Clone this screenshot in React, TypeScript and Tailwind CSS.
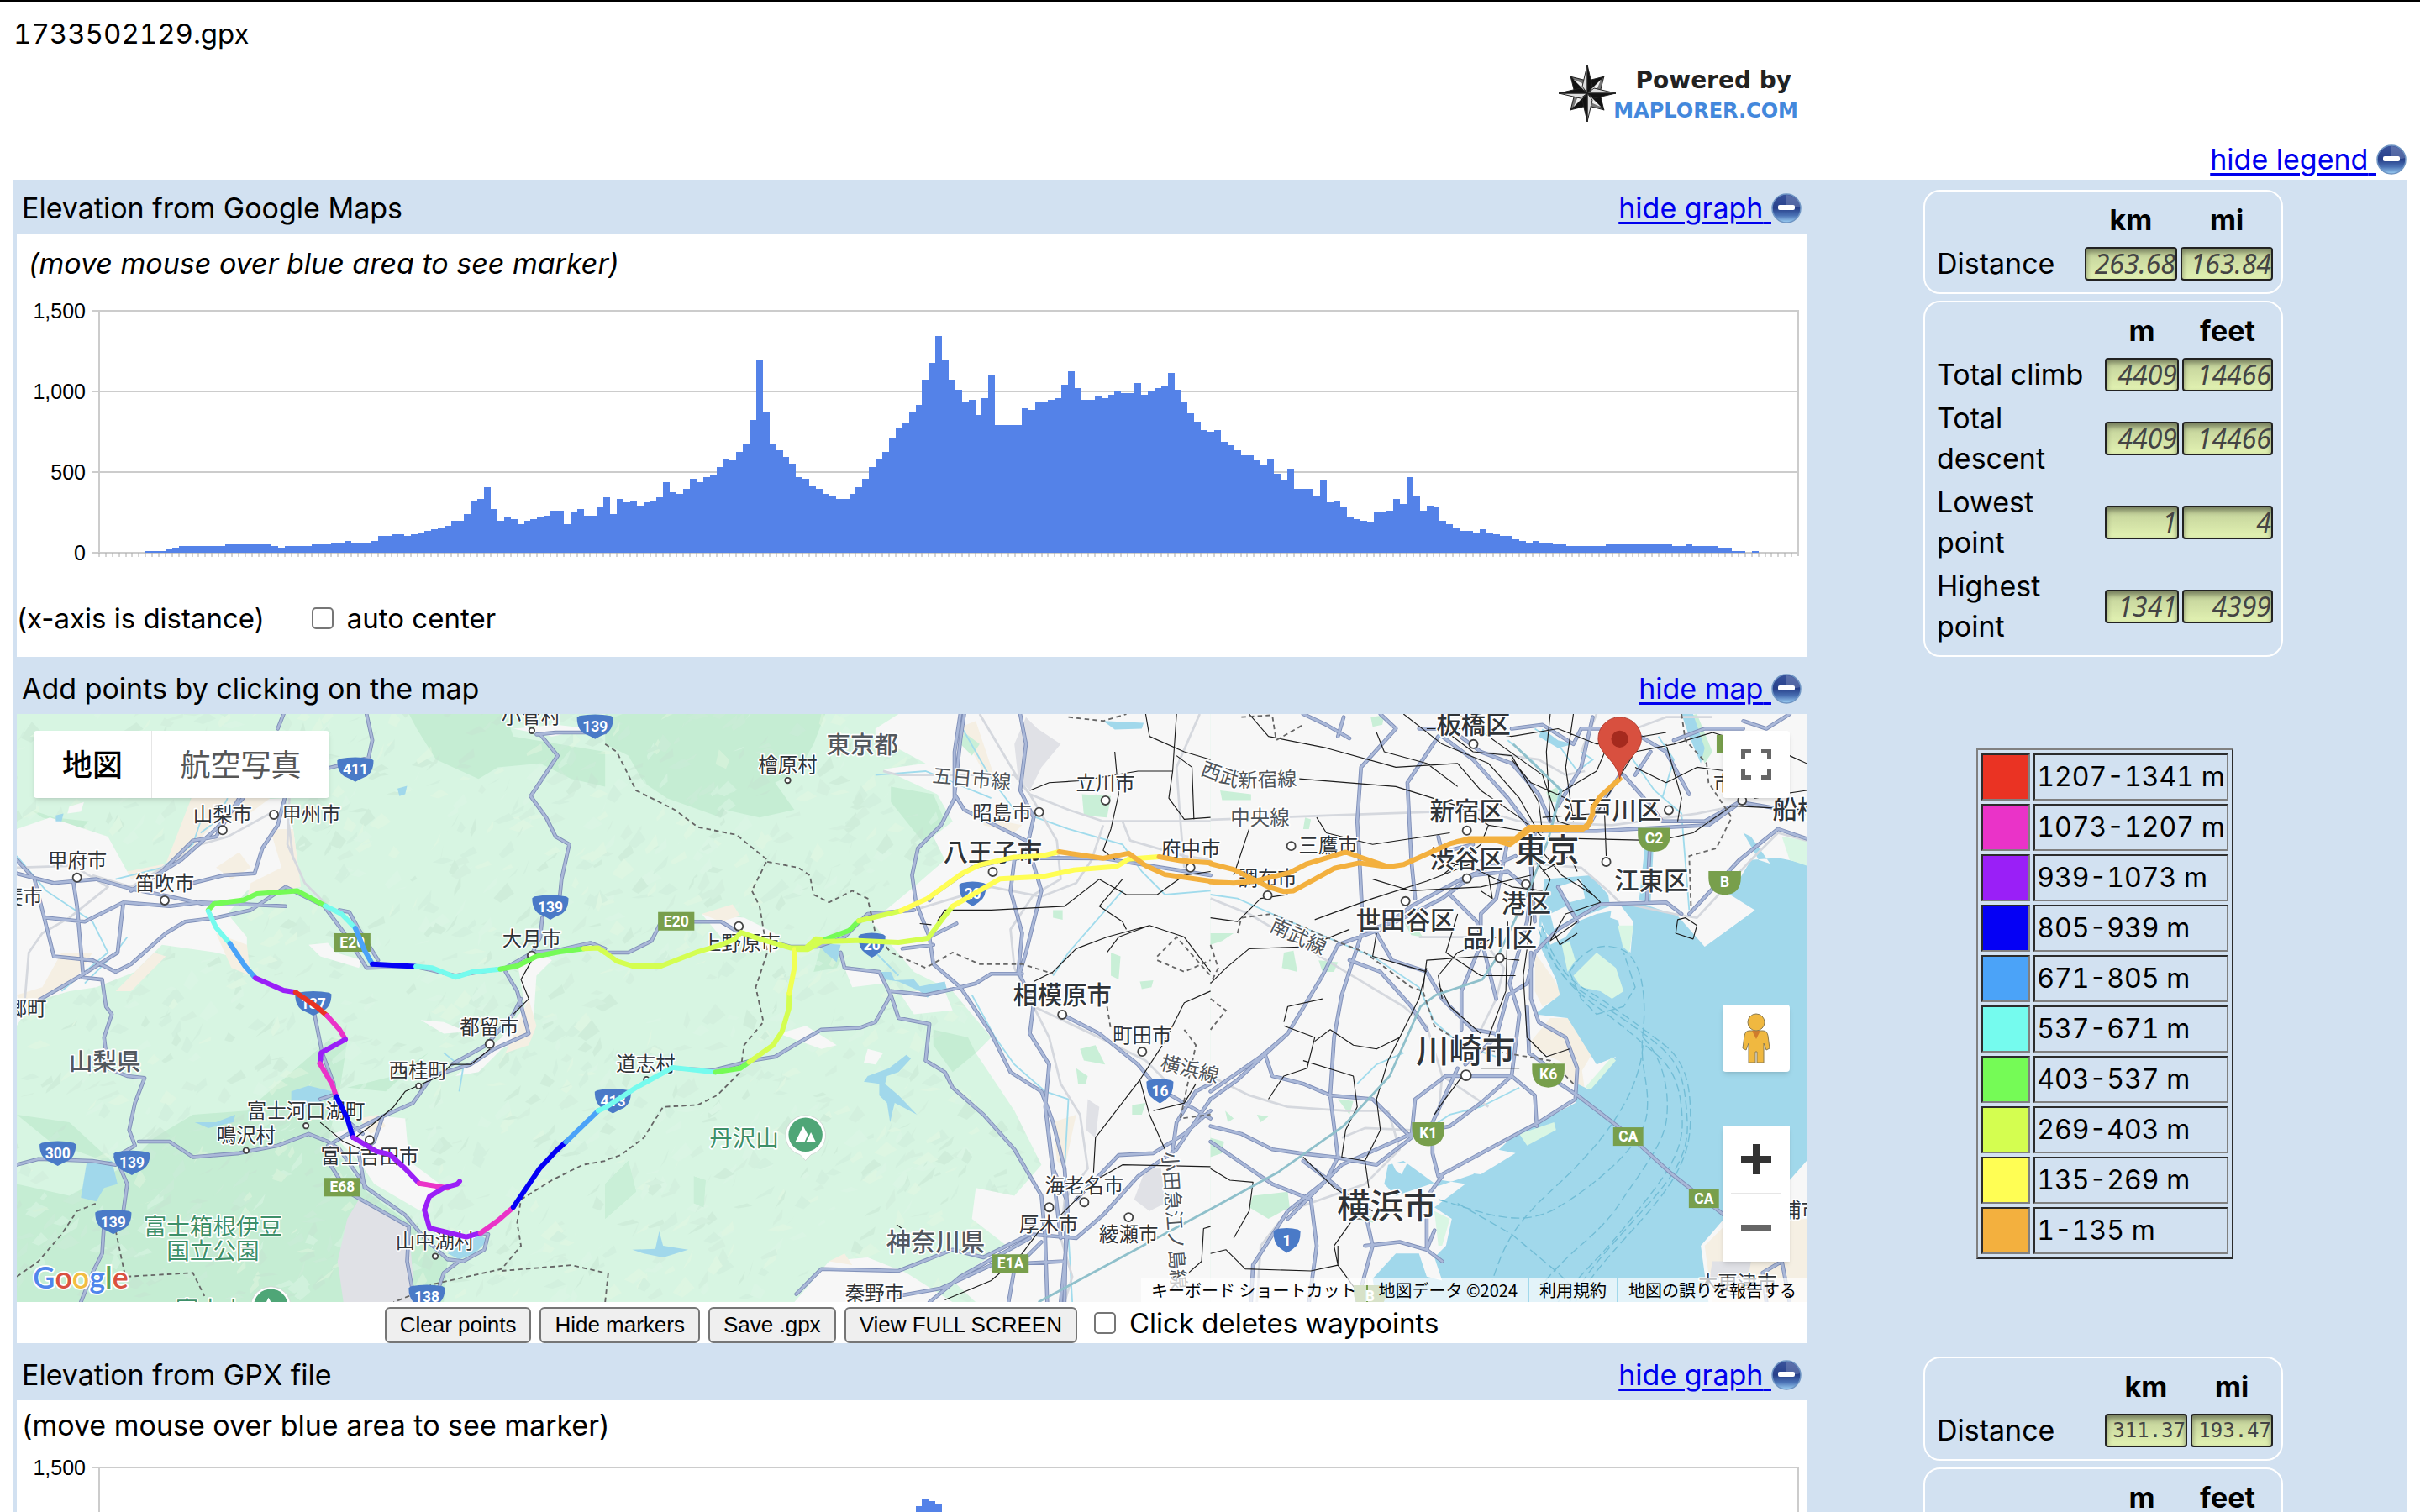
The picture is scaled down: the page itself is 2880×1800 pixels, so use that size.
import { useId } from "react";
import type { ReactNode, SVGProps } from "react";

const TILE = 1568;

// bar heights, one unit is 10.4 m of elevation
const googleSamples = [
  0, 0, 0, 0, 0, 0, 0, 1, 1, 1, 2, 3, 4, 4, 4, 4, 4, 4, 4, 5, 5, 5, 5, 5, 5, 5, 4, 3, 4, 4, 4, 4,
  5, 5, 5, 6, 6, 7, 6, 6, 6, 7, 10, 10, 11, 11, 10, 11, 12, 13, 14, 15, 16, 19, 19, 23, 31, 32, 39,
  26, 19, 21, 20, 17, 19, 20, 21, 22, 25, 25, 17, 24, 26, 22, 22, 27, 33, 23, 32, 30, 31, 28, 30,
  31, 33, 42, 36, 35, 38, 44, 42, 45, 46, 51, 56, 55, 60, 65, 79, 115, 84, 65, 61, 57, 53, 45, 44,
  40, 38, 35, 34, 32, 32, 35, 39, 44, 51, 56, 60, 68, 74, 77, 84, 88, 103, 113, 129, 115, 103, 97,
  90, 91, 82, 92, 106, 76, 76, 76, 76, 86, 85, 90, 90, 91, 92, 100, 108, 98, 91, 91, 93, 92, 94,
  96, 95, 95, 101, 94, 96, 98, 99, 107, 97, 90, 83, 78, 73, 72, 73, 66, 64, 61, 58, 58, 55, 52, 56,
  47, 43, 50, 38, 38, 38, 34, 43, 30, 31, 27, 21, 20, 19, 18, 24, 24, 25, 32, 29, 45, 34, 25, 28,
  27, 19, 17, 15, 13, 13, 12, 14, 12, 11, 10, 10, 8, 7, 6, 7, 6, 6, 5, 5, 4, 4, 4, 4, 4, 4, 5, 5,
  5, 5, 5, 5, 5, 5, 5, 5, 4, 4, 5, 4, 4, 4, 4, 3, 3, 1, 1, 0, 1, 0, 0, 0, 0, 0, 0,
];

const gpxSamples = googleSamples.map((value, i) =>
  i >= 123 && i <= 126 ? [121, 125, 124, 122][i - 123] : Math.min(value, 112)
);

const legend = [
  { color: "bg-[#ea3323]", label: "1207-1341 m" },
  { color: "bg-[#ea33c8]", label: "1073-1207 m" },
  { color: "bg-[#9a1ff7]", label: "939-1073 m" },
  { color: "bg-[#0500f5]", label: "805-939 m" },
  { color: "bg-[#4ba3f8]", label: "671-805 m" },
  { color: "bg-[#75fbee]", label: "537-671 m" },
  { color: "bg-[#75fb56]", label: "403-537 m" },
  { color: "bg-[#d4fe50]", label: "269-403 m" },
  { color: "bg-[#fffe54]", label: "135-269 m" },
  { color: "bg-[#f3b03e]", label: "1-135 m" },
];

function MinusIcon() {
  const id = useId();
  return (
    <svg viewBox="0 0 36 36" className="size-9 shrink-0" aria-hidden="true">
      <defs>
        <linearGradient id={id} x1="0" y1="0" x2="0" y2="1">
          <stop offset="0" stopColor="#3a539c" />
          <stop offset="0.5" stopColor="#27408a" />
          <stop offset="0.75" stopColor="#4a71b4" />
          <stop offset="1" stopColor="#9dd0f4" />
        </linearGradient>
      </defs>
      <circle cx="18" cy="18" r="17" fill={`url(#${id})`} stroke="#6f95c4" strokeWidth="1.500" />
      <path d="M18 2C28 3 34 9 34 16c-6 2-10 0-16 0z" fill="#fff" opacity="0.18" />
      <rect x="8" y="14" width="20" height="6" rx="2" fill="#fff" />
    </svg>
  );
}

function HideLink({ label }: { label: string }) {
  return (
    <a href="#" className="flex items-center text-[#0000ee]">
      <span className="whitespace-pre underline decoration-3 underline-offset-4">{label} </span>
      <MinusIcon />
    </a>
  );
}

function Logo() {
  return (
    <div className="flex h-[70px] items-center">
      <svg viewBox="0 0 70 70" className="size-[70px]" aria-hidden="true">
        <g stroke="#222" strokeWidth="1" strokeLinejoin="round">
          {[45, 135, 225, 315].map((angle) => (
            <g key={angle} transform={`rotate(${angle} 35 35)`}>
              <path d="M35 35L26 22L35 7Z" fill="#111" />
              <path d="M35 35L44 22L35 7Z" fill="#777" />
              <path d="M35 30L39 22L35 12Z" fill="#eee" stroke="none" />
            </g>
          ))}
          {[0, 90, 180, 270].map((angle) => (
            <g key={angle} transform={`rotate(${angle} 35 35)`}>
              <path d="M35 35L29 27L35 1Z" fill="#ddd" />
              <path d="M35 35L41 27L35 1Z" fill="#111" />
            </g>
          ))}
        </g>
      </svg>
      <div className="-ml-1 flex flex-col items-end pt-1.5 font-['DejaVu_Sans'] font-bold">
        <span className="pr-2 text-[28px] leading-9 text-[#222]">Powered by</span>
        <span className="text-2xl leading-9 text-[#4388dc]">MAPLORER.COM</span>
      </div>
    </div>
  );
}

function SectionHeader({ title, link, first }: { title: string; link: string; first?: boolean }) {
  return (
    <div
      className={
        first
          ? "flex h-16 items-center justify-between pt-1 pr-1.5 pl-1.5"
          : "flex h-17 items-center justify-between pt-2 pr-1.5 pl-1.5"
      }
    >
      <h2>{title}</h2>
      <HideLink label={link} />
    </div>
  );
}

function ElevationChart({ samples, label }: { samples: number[]; label: string }) {
  const left = 98;
  const pitch = 2022 / samples.length;
  let outline = `M${left} 300`;
  samples.forEach((value, i) => {
    outline += `V${300 - value * 2}H${Math.round(left + (i + 1) * pitch)}`;
  });
  return (
    <svg viewBox="0 0 2130 330" className="block w-full" role="img" aria-label={label}>
      {[1500, 1000, 500, 0].map((level, i) => (
        <g key={level}>
          <path d={`M90 ${12 + i * 96}H2121`} stroke="#ccc" strokeWidth="2" />
          <text
            x="82"
            y={21 + i * 96}
            textAnchor="end"
            fontSize="25"
            fontFamily="Liberation Sans, sans-serif"
          >
            {level.toLocaleString("en-US")}
          </text>
        </g>
      ))}
      <path d="M98 12V300M2120 12V304" stroke="#ccc" strokeWidth="2" />
      <path
        d={samples.map((_, i) => `M${Math.round(left + i * pitch)} 300v5`).join("")}
        stroke="#aaa"
        strokeWidth="1"
      />
      <path d={outline + "V300Z"} fill="#5482e8" />
    </svg>
  );
}

function Meter({ label, value, width, mono }: { label: string; value: string; width: string; mono?: boolean }) {
  return (
    <input
      readOnly
      aria-label={label}
      value={value}
      className={`${width} block h-10 rounded-sm border-2 border-[#222] bg-linear-to-b from-[#c0ce98] to-[#e2f2b2] text-right text-[#444] shadow-[inset_0_4px_6px_rgba(0,0,0,0.4)] outline-none ${
        mono
          ? "font-['DejaVu_Sans_Mono'] text-2xl"
          : "font-['Noto_Sans'] text-[32px] italic"
      }`}
    />
  );
}

type StatRow = { label: string; values: string[] };

function StatsBox({
  units,
  rows,
  widths,
  mono,
}: {
  units: string[];
  rows: StatRow[];
  widths: string[];
  mono?: boolean;
}) {
  return (
    <div className="w-[428px] rounded-[20px] border-2 border-white p-1.5">
      <table className="w-full border-separate border-spacing-1">
        <thead>
          <tr>
            <td />
            {units.map((unit) => (
              <th key={unit} scope="col" className="p-0 text-center font-bold">
                {unit}
              </th>
            ))}
          </tr>
        </thead>
        <tbody>
          {rows.map((row) => (
            <tr key={row.label}>
              <th scope="row" className="w-full py-0 pr-4 pl-1 text-left font-normal">
                {row.label}
              </th>
              {row.values.map((value, i) => (
                <td key={units[i]} className="p-0">
                  <Meter
                    label={`${row.label} (${units[i]})`}
                    value={value}
                    width={widths[i]}
                    mono={mono}
                  />
                </td>
              ))}
            </tr>
          ))}
        </tbody>
      </table>
    </div>
  );
}

// Map artwork. Every list holds one entry per tile, each tile is 1568 units wide.
const flats = [
  [
    "M44 320L130 290L280 340L330 430L430 430L470 340L520 250L740 240L760 320L770 400L740 460L640 480L590 540L640 600L640 660L560 640L420 620L350 690L250 730L180 740L80 770L44 830Z",
    "M180 262L218 250L210 275L175 280Z",
    "M860 1110L1000 1065L1050 1070L1060 1180L1140 1240L1090 1310L970 1240L930 1180Z",
    "M1340 660L1400 640L1430 660L1390 700L1380 850L1300 890L1240 950L1180 960L1300 860L1360 780Z",
    "M1090 815L1150 820L1210 845L1150 850Z",
    "M800 620L850 615L870 640L940 660L930 680L830 650Z",
    "M1330 60L1440 50L1530 60L1430 80Z",
  ],
  [
    "M700 60L760 22L1568 22L1568 1546L960 1546L900 1490L1040 1400L950 1330L960 1250L1060 1270L1130 1190L1060 1050L960 900L1000 860L900 740L800 690L690 560L800 470L880 400L850 340L900 300L860 230L720 165L830 150L700 80Z",
    "M490 1546L580 1440L680 1430L780 1470L900 1546Z",
    "M250 540L360 550L440 590L440 640L300 600Z",
    "M450 850L520 830L600 880L560 890Z",
    "M680 890L720 900L700 930L670 925Z",
    "M620 680L710 690L720 720L640 730Z",
    "M760 740L880 740L900 790L800 800Z",
  ],
  ["M0 22H1568V1546H0Z"],
];

const sand = [
  [
    "M500 230L700 240L620 300L560 300L470 400L340 450L330 430L430 410Z",
    "M700 320L760 320L780 470L640 500L650 460L730 420Z",
    "M160 640L240 640L190 720L60 790L44 750L110 730Z",
    "M560 590L640 620L650 700L600 680Z",
    "M300 740L400 640L430 650L340 740Z",
    "M560 420L620 380L650 420L600 450Z",
    "M1370 760L1390 830L1370 880L1310 900Z",
    "M930 1070L980 1060L1000 1090L960 1110Z",
  ],
  [
    "M910 60L960 40L1010 190L990 190L940 100Z",
    "M1160 1080L1220 1060L1190 1200L1170 1180Z",
    "M250 540L330 515L350 545L300 560Z",
    "M980 290L1080 310L1060 330L980 310Z",
    "M580 1440L620 1420L640 1450Z",
  ],
  [
    "M840 640L890 710L910 750L860 780L840 740Z",
    "M830 870L880 810L930 810L990 900L960 950L900 920L840 890Z",
    "M1280 1400L1340 1340L1544 1330L1544 1546L1300 1546Z",
    "M920 920L960 930L970 1000L920 960Z",
  ],
];

const forests = [
  [
    "M44 1240L180 1270L330 1190L400 1120L500 1060L640 1050L860 860L900 870L880 1000L850 1130L950 1260L1060 1340L1160 1440L1150 1546L44 1546Z",
    "M1060 22L1310 22L1330 80L1568 120L1568 210L1480 190L1400 150L1290 160L1240 190L1130 140L1080 60Z",
    "M80 270L140 290L230 300L210 320L110 290Z",
    "M250 590L272 592L268 620L252 610Z",
    "M44 1060L180 1080L300 1190L130 1130Z",
    "M900 990L1020 960L1110 900L1000 1000Z",
  ],
  [
    "M0 22L570 22L540 100L500 170L440 200L490 270L400 290L310 270L300 290L160 240L100 200L60 130L0 100Z",
    "M740 210L850 230L880 300L820 350L740 250Z",
    "M560 620L620 640L600 680L540 690Z",
    "M850 840L940 860L960 900L900 950L850 880Z",
    "M930 70L970 100L950 130L920 100Z",
    "M1235 230L1310 235L1300 290L1240 285Z",
    "M1230 890L1270 880L1295 930L1240 920Z",
    "M1310 640L1335 650L1330 710L1310 700Z",
    "M1160 530L1185 530L1185 555L1160 550Z",
    "M1385 715L1420 712L1415 730L1390 735Z",
    "M1220 940L1250 960L1245 980L1225 980Z",
    "M1365 1035L1400 1030L1390 1060L1365 1060Z",
    "M230 1220L260 1230L255 1300L230 1290Z",
    "M0 1240L60 1180L80 1260L0 1330Z",
  ],
  [
    "M25 220L105 230L105 245L30 245Z",
    "M110 1270L200 1260L205 1300L150 1330L100 1300Z",
    "M0 1120L35 1130L30 1160L0 1170Z",
    "M190 640L215 635L225 690L185 680Z",
    "M0 590L60 590L30 610L0 620Z",
    "M870 225L900 210L900 250L880 250Z",
    "M330 1020L370 1025L360 1060Z",
    "M38 1050L60 1070L45 1080Z",
    "M120 1060L150 1065L130 1080Z",
    "M280 660L330 665L320 690L290 690Z",
    "M1225 30L1260 22L1300 120L1280 150Z",
    "M415 30L450 25L445 50L420 55Z",
    "M245 290L260 295L255 320L240 320Z",
    "M500 560L530 570L550 600L520 595Z",
    "M380 1330L430 1320L420 1340Z",
  ],
];

const water = [
  [
    "M755 1000L800 985L860 1000L850 1020L790 1040L755 1025Z",
    "M505 1080L560 1080L610 1060L605 1080L540 1095Z",
    "M225 1185L290 1180L305 1240L270 1250L250 1285L210 1275Z",
    "M1160 1420L1240 1370L1265 1385L1230 1420L1190 1435Z",
    "M1030 215L1055 208L1050 230L1035 235Z",
    "M145 285L165 280L160 300L145 300Z",
  ],
  [
    "M735 940L780 905L792 915L760 950L730 960L725 980L760 1010L808 1060L770 1040L750 1030L738 1080L730 1030L710 1010L710 980L670 975L680 960Z",
    "M70 1410L130 1408L140 1362L150 1400L215 1410L150 1430L100 1420Z",
    "M710 690L740 690L750 712L800 710L815 728L845 722L880 715L885 735L850 745L835 757L815 740L760 715L725 710Z",
    "M550 615L610 620L600 665L570 640Z",
    "M1290 40L1395 45L1390 60L1320 62Z",
  ],
  [
    "M1544 410L1470 395L1400 400L1370 450L1310 490L1410 530L1280 625L1210 545L1110 510L1060 515L1095 560L1088 640L1070 620L1050 530L1000 540L950 560L920 600L880 620L858 560L852 620L895 710L905 750L840 800L925 810L1000 930L1050 910L980 995L950 980L945 1030L870 1070L800 1100L680 1215L590 1245L500 1180L460 1190L450 1240L480 1270L600 1230L660 1240L580 1300L625 1330L610 1400L580 1430L600 1490L560 1480L540 1420L480 1420L420 1485L430 1546L1290 1546L1270 1400L1330 1330L1400 1300L1500 1230L1544 1180Z",
    "M865 450L985 440L1030 490L1035 520L940 555L880 600L850 570Z",
    "M1130 320L1150 320L1140 510L1110 505Z",
    "M1220 22L1250 22L1280 110L1270 150L1240 80Z",
    "M860 60L900 90L940 100L900 110L850 80Z",
    "M1380 330L1400 340L1450 410L1420 400Z",
  ],
];

// reclaimed land on top of the bay
const islands = [
  { fill: "#d9f6e4", d: "M940 700L1000 640L1050 680L1070 740L1040 760L1010 740L960 730Z" },
  { fill: "#f7f7f7", d: "M880 540L920 520L940 550L890 580Z" },
  { fill: "#f7f7f7", d: "M900 470L960 450L970 500L930 510Z" },
  { fill: "#f7f7f7", d: "M660 1180L740 1150L790 1160L700 1215L660 1210Z" },
  { fill: "#d9f6e4", d: "M800 1110L890 1080L895 1100L820 1140Z" },
  { fill: "#f7f7f7", d: "M610 1100L690 1065L720 1080L640 1120Z" },
  { fill: "#f7f7f7", d: "M740 1060L830 1000L860 1010L780 1080Z" },
  { fill: "#d9f6e4", d: "M970 990L1040 910L1050 920L985 995Z" },
  { fill: "#f7f7f7", d: "M1040 520L1060 520L1065 560L1035 550Z" },
  { fill: "#d9f6e4", d: "M1055 570L1095 570L1085 640L1068 625Z" },
  { fill: "#f7f7f7", d: "M470 1185L510 1185L495 1215L480 1205Z" },
  { fill: "#d9f6e4", d: "M910 620L930 610L945 660L925 690Z" },
  { fill: "#d9f6e4", d: "M580 1310L620 1330L600 1400L590 1400Z" },
  { fill: "#f7f7f7", d: "M1270 490L1330 480L1410 530L1285 620L1250 550Z" },
  { fill: "#d9f6e4", d: "M1480 340L1544 350L1544 415L1500 400Z" },
];

const greys = [
  ["M930 1280L1060 1350L1075 1546L890 1546L875 1440L900 1330Z"],
  [
    "M1090 30L1120 60L1180 100L1130 160L1100 220L1070 190L1060 100Z",
    "M1400 1200L1440 1200L1450 1290L1410 1310L1370 1280Z",
    "M1250 1020L1280 1040L1270 1120L1245 1100Z",
    "M1270 230L1290 235L1285 275L1265 275Z",
  ],
  ["M1300 1440L1400 1440L1390 1500L1290 1500Z"],
];

const streams = [
  [
    "M44 390L120 480L240 560L280 640L160 740",
    "M300 450L420 420L500 360L520 300",
    "M590 240L560 300L520 330",
    "M1150 900L1200 940L1190 1000",
    "M220 720L300 640L330 600",
  ],
  [
    "M920 50L1000 190L1060 270L1200 320L1340 360L1390 430L1450 490L1568 480",
    "M950 750L1010 860L1060 930L1140 1000L1200 1020L1190 1200L1210 1546",
    "M700 180L830 170L1000 240",
    "M1340 480L1200 640L1160 700",
    "M700 640L760 700",
  ],
  [
    "M0 490L70 500L160 540L300 600L420 650L540 730L580 820L650 880L740 910",
    "M840 60L900 100L950 170L990 140L960 120",
    "M1080 120L1150 220L1220 280L1240 530",
    "M770 90L830 140L905 220L880 320",
    "M1160 80L1200 140L1170 240",
    "M560 1100L620 1060L700 1040L800 990",
    "M500 900L430 930L380 980",
  ],
];

const minorRoads = [
  [
    "M44 420L190 415L280 470L180 550L110 590L75 640L65 760",
    "M240 440L340 470L520 360L590 340L700 280",
    "M750 240L745 360L790 460L850 520",
    "M740 240L760 400",
  ],
  [
    "M720 170L760 180L1060 180L1100 230L1200 270L1290 300L1568 300",
    "M970 22L1070 190L1100 230L1170 350L1180 450L1110 490",
    "M1290 310L1260 400L1220 460L1130 495L1000 470L800 530",
    "M1110 490L1050 580L1060 680L1110 780L1150 860L1180 980L1230 1060L1250 1200L1190 1280L1180 1380L1210 1480L1190 1546",
    "M1110 780L1300 870L1400 920L1460 980",
    "M1540 22L1480 160L1490 300L1500 420",
    "M1340 300L1360 350L1500 390L1568 400",
  ],
  [
    "M0 296L300 285L600 275L660 260L800 300L1040 310L1260 280L1360 260",
    "M0 500L100 540L250 630L350 690L500 780L560 830L600 960L720 1040",
    "M0 960L100 1010L200 1040L350 1050L460 1050L490 1150L400 1240L200 1310L130 1400L120 1546",
    "M840 410L960 420L1030 480L1060 510L1200 540L1260 550L1400 400L1470 330L1544 350",
    "M700 120L850 140L920 180L970 170",
    "M960 120L1000 22",
    "M1100 60L1180 30L1300 30",
    "M540 600L700 600L760 680L740 760L700 840",
    "M340 1120L400 1095L520 1100",
    "M600 960L590 1060",
  ],
];

const roads = [
  [
    "M44 435L140 460L250 450L340 475L440 495L530 515L620 515",
    "M44 400L90 450L120 570L140 650L240 660L300 690L340 670L430 590L480 560L560 550L650 530L740 470L840 520L900 600L950 680L1075 676",
    "M120 550L220 560L320 510L440 520L520 510L740 520",
    "M190 455L200 520L215 690",
    "M320 510L305 640L210 700L90 770",
    "M215 705L265 710L275 780L290 800L270 860L280 940L330 960L375 965L350 1030L335 1100L350 1140L300 1170L330 1240L320 1310L270 1340L265 1420L240 1470L210 1546",
    "M340 480L420 430L500 350L560 340L620 240",
    "M390 450L470 400L560 320L630 240",
    "M500 460L580 440L660 435L680 370L720 310L738 240",
    "M820 170L900 150L955 135L965 90L950 22",
    "M720 60L735 22",
    "M44 1190L100 1175L240 1180L300 1190",
    "M360 1130L440 1130L500 1170L620 1160L720 1140L800 1110L850 1130",
    "M1400 75L1445 130L1375 235L1415 290L1440 340L1475 360L1455 450L1450 500",
    "M1390 75L1440 70L1568 70",
    "M1405 550L1400 600L1380 640L1310 680L1180 700L1075 676",
    "M880 530L905 535L930 580L980 660",
    "M1310 690L1340 740L1370 850L1280 890L1220 930L1120 960L1070 1030L980 1070L920 1100L850 1140",
    "M1350 760L1330 800L1260 880L1170 930",
    "M815 800L835 900L865 980L870 1050L940 1110",
    "M850 1130L880 1150L950 1250L1050 1320L1100 1380L1160 1435",
    "M990 1070L970 1130L930 1160L945 1250",
    "M850 1180L900 1260L1060 1350L1055 1440L1070 1520",
    "M1245 1367L1265 1370L1255 1410L1200 1440L1160 1435",
    "M1190 1440L1150 1470L1130 1530",
    "M830 1020L860 1010",
    "M1380 640L1440 635L1530 615L1568 630",
  ],
  [
    "M0 640L60 640L120 610L145 560L300 560L350 590L480 625L550 625L620 600L680 540L800 530",
    "M920 22L905 120L905 240L870 310L810 370L795 440L805 510L840 600L850 670L920 730L1000 850L1050 950L1130 1000L1160 1080L1190 1200L1200 1340L1180 1546",
    "M930 22L920 90L905 230L930 270L1090 350",
    "M1075 22L1090 100L1075 220L1110 290L1090 380L1060 400L1050 480L1080 590L1070 690L1110 770L1100 850L1150 930L1140 1040L1180 1380",
    "M1100 380L1130 480L1090 640L1075 690",
    "M840 505L850 490L950 420L1060 395L1290 396L1568 440",
    "M740 740L830 750L900 735L960 720L1000 695L1080 695",
    "M610 640L620 680L710 690L740 750L700 820L660 835L560 840L490 880L440 910L380 920L280 945L180 940",
    "M740 750L760 810L840 825L830 920L880 950L900 990L980 1060L1060 1150L1130 1270L1140 1380",
    "M495 1525L560 1460L760 1465L900 1410L980 1430L1100 1370L1220 1380L1290 1320L1380 1220L1480 1150L1568 1020",
    "M760 1530L870 1510L1000 1450L1190 1440",
    "M840 1546L920 1480L1100 1380",
    "M1140 1380L1145 1546",
    "M1130 1390L1060 1460L1045 1546",
    "M1220 1280L1330 1165L1420 1160L1500 1110L1568 1050",
    "M1184 801L1280 850L1380 930L1430 990L1500 1030L1568 1070",
    "M1470 1150L1480 1080L1530 1000L1568 980",
    "M770 630L850 620",
    "M840 600L910 565",
    "M1140 1040L1160 1200L1195 1280L1190 1546",
  ],
  [
    "M240 22L300 50L360 85",
    "M330 80L345 30",
    "M440 22L480 60L390 160L380 300L385 380L395 580L340 750L320 860L310 1010L330 1170L300 1230L200 1310L110 1450L105 1546",
    "M590 80L510 200L520 400L530 500",
    "M600 80L680 140L770 240L830 320",
    "M540 60L620 60L700 120L780 150L850 230L880 300",
    "M780 60L860 50L940 100L960 60L1080 60L1180 120L1240 230",
    "M990 30L960 160L900 260",
    "M1060 180L1010 260L980 310",
    "M1070 180L1140 260L1170 300L1280 300L1370 250L1544 280",
    "M830 325L1000 325L1290 310L1360 260",
    "M1140 120L1100 180",
    "M1544 345L1470 320L1370 400L1240 540",
    "M1220 540L1180 510L1010 515L900 580L840 640L820 720L770 750L740 860L660 930",
    "M830 640L830 760L850 820L920 860L950 940L945 1020L850 1080L590 1220L575 1160L575 1080L640 940",
    "M820 780L825 900L880 940",
    "M395 585L480 560L600 500L680 440L770 430L830 480L820 560L775 720L800 800L780 960L700 1030L620 1090L520 1110L340 1190L200 1330",
    "M0 1020L70 970L200 850L290 700L330 620L440 580L520 520L650 450L790 390",
    "M430 590L470 660L560 690L600 760L680 840L740 850",
    "M360 660L440 690L520 780L560 840",
    "M650 840L650 740L700 620L700 540L740 500L770 350",
    "M620 490L690 560L710 640L740 760",
    "M590 340L600 380L680 360",
    "M0 1090L80 1110L160 1150L230 1160L320 1170L430 1190L520 1120L530 1020L610 960L780 960L840 1010L845 1090",
    "M140 900L160 960L240 980L310 1010L420 1020L510 1110",
    "M0 1130L160 1240L260 1280L275 1400L255 1546",
    "M240 1180L320 1240L400 1310L420 1400L380 1546",
    "M400 1400L490 1390L560 1410L580 1360",
    "M560 1330L560 1410L600 1440",
    "M890 970L950 1010L1080 1110L1190 1210L1330 1320",
    "M570 1260L600 1220",
    "M200 850L130 910L0 1000",
    "M1140 330L1130 510",
    "M1200 90L1280 60L1380 60",
    "M1380 40L1440 60L1500 22",
    "M1440 1546L1430 1470L1480 1440L1500 1546",
    "M840 330L830 420L840 560",
    "M900 470L950 560",
  ],
];

const rails = [
  [
    "M1378 660L1350 710L1370 760L1330 800",
    "M1270 890L1220 930L1170 930L1140 960L1050 1000L1020 1040L960 1090L920 1120",
    "M830 1080L890 1130L960 1160",
  ],
  [
    "M1100 220L1150 200L1230 195L1380 170L1470 170L1480 22",
    "M1470 170L1460 240L1500 295L1568 290",
    "M1320 120L1330 230L1310 320L1290 375L1320 400",
    "M860 560L880 530L1000 530L1190 520L1280 450L1350 490L1430 490L1500 440L1568 430",
    "M1110 715L1160 690L1220 630L1300 600L1410 570L1500 600L1568 690",
    "M1300 640L1330 600L1410 570",
    "M1340 450L1280 520L1340 560L1350 580",
    "M1568 740L1500 770L1450 870L1385 970L1270 1120L1265 1210",
    "M1385 970L1410 1060L1450 1150",
    "M1180 1320L1270 1230L1340 1190L1568 1195",
    "M880 1540L1000 1490L1080 1420L1140 1340",
    "M1400 22L1410 80L1500 120L1568 140",
    "M1420 1050L1500 1030L1530 980",
    "M1480 130L1520 160L1525 295",
    "M815 565L845 568",
    "M1500 1480L1545 1440L1550 1355L1568 1350",
    "M755 1345L775 1360",
  ],
  [
    "M100 22L150 80L300 110L480 160L640 150L700 220L800 290L860 340",
    "M230 190L480 210L640 260L720 310L840 330",
    "M275 290L300 330L420 360L620 330",
    "M100 320L60 440",
    "M270 555L420 500L560 455L700 400",
    "M0 550L70 560L130 500L200 490",
    "M0 720L40 680L100 630L250 625L360 580",
    "M430 70L450 120L560 150L640 210",
    "M600 60L680 120L780 130L850 250L860 330",
    "M880 22L870 120L880 300",
    "M860 290L1000 280L1100 120L1200 100L1300 70L1500 130L1544 150",
    "M900 230L1000 170L1060 30",
    "M950 345L1160 350L1250 330L1350 260L1544 270",
    "M1025 390L1020 260",
    "M950 450L1010 510L920 540L880 610L950 560",
    "M840 350L830 560L810 700L820 860L870 910L930 890",
    "M770 560L765 740L720 860",
    "M550 740L560 660L700 650L800 660",
    "M430 590L420 650L560 690",
    "M560 680L540 760L460 920L430 1020L440 1100L400 1180L410 1250",
    "M190 830L270 860L250 940L190 960L150 1020",
    "M270 870L310 840L370 880L430 890L490 860",
    "M190 820L200 780L290 760",
    "M240 920L370 960L380 1040L350 1100L340 1170L400 1180",
    "M600 760L590 700L640 640L740 600",
    "M590 720L620 780L700 850",
    "M660 950L600 1030L580 1060",
    "M700 940L800 940",
    "M1210 555L1205 590L1250 605L1260 570L1230 550Z",
    "M890 590L905 620L950 590",
    "M0 1200L50 1230L110 1235L100 1310L60 1380",
    "M0 1420L40 1410L90 1460L260 1465L330 1450L320 1400L370 1330L440 1330",
    "M240 1170L320 1250L420 1310",
    "M330 1400L330 1450L400 1546",
    "M780 140L830 200L920 240",
    "M700 480L730 500L720 440",
    "M860 430L930 390L950 430",
    "M720 310L700 360L600 440",
    "M640 540L610 640L700 700L790 700",
    "M500 22L600 100L720 150L800 240L850 330",
    "M640 22L720 80L860 180L900 300L960 320",
    "M940 22L920 160L940 300",
    "M560 60L660 60L780 80L900 60L1000 100L1180 70",
    "M1100 160L1180 200L1260 160L1340 170L1410 240L1544 220",
    "M1180 100L1220 240L1210 300",
    "M590 400L680 420L780 470L860 480",
    "M860 380L910 440L990 490",
    "M840 400L880 450L860 500",
    "M420 450L520 480L700 470L830 440",
  ],
];

const borders = [
  [
    "M44 1480L100 1440L160 1370L200 1310L250 1290",
    "M300 1360L325 1480L500 1470L530 1530",
    "M1568 1180L1510 1190L1430 1230L1350 1280L1340 1340L1350 1400L1300 1460L1120 1500L1060 1530L1020 1546",
    "M1300 1465L1480 1450L1568 1470",
  ],
  [
    "M0 100L30 120L80 220L180 270L240 315L340 335L420 400L380 480L400 520L420 640L390 730L410 820L360 880L350 950L290 1010L240 1035L150 1040L100 1120L40 1165L0 1178",
    "M420 405L500 420L530 440L540 490L580 510L640 480L680 500L700 590L740 640L830 680L900 640L970 670L1080 670L1160 695",
    "M1200 30L1290 40L1350 22",
    "M1430 650L1480 600L1568 700",
    "M1430 660L1500 690L1568 660",
    "M1500 840L1530 880L1490 1070L1568 1060",
    "M1300 780L1310 840",
    "M0 1546L8 1470",
  ],
  [
    "M70 590L80 550L160 540L300 600L400 640L520 730L550 740L580 830L660 880L760 900L880 920L940 980",
    "M0 620L20 680L0 720",
    "M0 760L40 790L0 840",
    "M80 30L160 25L170 90L240 50",
    "M1220 22L1230 90L1285 150L1290 200L1350 290L1310 370L1240 390L1245 530",
  ],
];

const routes: { color: string; d: string }[][] = [
  [
    { color: "#75fb56", d: "M540 530L555 514L632 504L665 488L770 480L843 519" },
    { color: "#75fbee", d: "M843 519L885 540L921 577" },
    { color: "#4ba3f8", d: "M921 577L945 635L965 670" },
    { color: "#0500f5", d: "M965 670L1075 676" },
    { color: "#75fbee", d: "M1078 676L1120 680L1180 704L1225 690L1296 683" },
    { color: "#75fb56", d: "M1296 683L1340 675L1390 650L1450 638L1513 630" },
    { color: "#d4fe50", d: "M1513 630L1550 628L1568 640" },
    { color: "#75fbee", d: "M540 533L560 575L596 617" },
    { color: "#4ba3f8", d: "M596 617L635 675L662 706" },
    { color: "#9a1ff7", d: "M662 706L735 738L766 743" },
    { color: "#ea3323", d: "M766 743L820 780L848 804" },
    { color: "#ea33c8", d: "M848 804L880 840L895 865" },
    { color: "#9a1ff7", d: "M895 865L832 900L829 928" },
    { color: "#ea33c8", d: "M829 928L860 980L872 1013" },
    { color: "#0500f5", d: "M872 1013L900 1070L915 1119" },
    { color: "#9a1ff7", d: "M915 1119L975 1155L1010 1163L1050 1200L1086 1238" },
    { color: "#ea33c8", d: "M1086 1238L1160 1250" },
    { color: "#9a1ff7", d: "M1191 1233L1185 1240L1150 1250L1113 1272L1100 1307L1113 1354L1208 1377L1245 1367" },
    { color: "#ea33c8", d: "M1245 1367L1290 1335L1330 1300" },
    { color: "#0500f5", d: "M1330 1300L1398 1200L1440 1155L1466 1131" },
    { color: "#4ba3f8", d: "M1466 1131L1550 1050" },
    { color: "#75fbee", d: "M1550 1050L1568 1042" },
  ],
  [
    { color: "#d4fe50", d: "M0 640L30 662L70 675L145 675L240 638L295 622L335 606L352 588L400 605L480 628L520 628L545 605L570 606" },
    { color: "#75fbee", d: "M0 1042L80 990L175 938L282 950" },
    { color: "#75fb56", d: "M286 950L350 940L373 924" },
    { color: "#d4fe50", d: "M373 924L435 880L458 845L476 785L477 746" },
    { color: "#f0ff52", d: "M477 746L490 680L490 632" },
    { color: "#75fb56", d: "M570 606L632 583L657 558" },
    { color: "#d4fe50", d: "M657 558L766 532" },
    { color: "#fffe54", d: "M766 532L835 500L925 435L970 413L1060 393L1130 390L1176 379" },
    { color: "#d4fe50", d: "M500 632L525 632L560 612L655 609L760 614L836 603L880 545L900 520" },
    { color: "#fffe54", d: "M900 520L1023 449L1135 443L1215 426L1325 417L1356 398L1435 392" },
    { color: "#f3b03e", d: "M1176 379L1290 396L1356 383L1400 415L1450 438L1568 455" },
    { color: "#f3b03e", d: "M1435 392L1490 402L1568 408" },
  ],
  [
    { color: "#f3b03e", d: "M0 410L60 425L115 452L150 470L190 482L215 480L270 450L320 422L385 408L460 418" },
    { color: "#f3b03e", d: "M0 457L60 460L115 455L205 433L250 410L350 380L385 392L460 418L500 412L620 358L670 345L790 345L825 316L975 316L990 280L990 265L1010 235L1060 190" },
    { color: "#f3b03e", d: "M640 352L740 350L775 360L805 338L830 320L965 320L985 300" },
  ],
];

type Place = { x: number; y: number; text: string; size?: number; weight?: number; fill?: string; rotate?: number };

const places: Place[][] = [
  [
    { x: 1376, y: 46, text: "小菅村" },
    { x: 577, y: 300, text: "山梨市" },
    { x: 807, y: 300, text: "甲州市" },
    { x: 201, y: 420, text: "甲府市" },
    { x: 427, y: 480, text: "笛吹市" },
    { x: 60, y: 514, text: "斐市" },
    { x: 70, y: 803, text: "郷町" },
    { x: 1378, y: 623, text: "大月市" },
    { x: 1268, y: 851, text: "都留市" },
    { x: 272, y: 944, text: "山梨県", size: 62, weight: 500, fill: "#53585f" },
    { x: 1084, y: 965, text: "西桂町" },
    { x: 793, y: 1068, text: "富士河口湖町" },
    { x: 638, y: 1131, text: "鳴沢村" },
    { x: 958, y: 1187, text: "富士吉田市" },
    { x: 1127, y: 1407, text: "山中湖村" },
    { x: 552, y: 1372, text: "富士箱根伊豆", size: 60, fill: "#3d8f68" },
    { x: 552, y: 1434, text: "国立公園", size: 60, fill: "#3d8f68" },
    { x: 545, y: 1586, text: "富士山", size: 60, fill: "#3d8f68" },
  ],
  [
    { x: 666, y: 125, text: "東京都", size: 62, weight: 500, fill: "#53585f" },
    { x: 473, y: 173, text: "檜原村" },
    { x: 948, y: 208, text: "五日市線", rotate: 5, fill: "#50555a" },
    { x: 1296, y: 221, text: "立川市" },
    { x: 1028, y: 296, text: "昭島市" },
    { x: 1004, y: 402, text: "八王子市", size: 64, weight: 500 },
    { x: 1517, y: 390, text: "府中市" },
    { x: 352, y: 634, text: "上野原市" },
    { x: 1184, y: 773, text: "相模原市", size: 64, weight: 500 },
    { x: 1391, y: 872, text: "町田市" },
    { x: 1510, y: 960, text: "横浜線", rotate: 14, fill: "#50555a" },
    { x: 105, y: 948, text: "道志村" },
    { x: 360, y: 1142, text: "丹沢山", size: 60, fill: "#3d8f68" },
    { x: 1241, y: 1263, text: "海老名市" },
    { x: 1149, y: 1362, text: "厚木市" },
    { x: 1356, y: 1388, text: "綾瀬市" },
    { x: 856, y: 1412, text: "神奈川県", size: 64, weight: 500, fill: "#53585f" },
    { x: 698, y: 1542, text: "秦野市" },
    { x: 1456, y: 1335, text: "小田急江ノ島線", rotate: 86, fill: "#50555a" },
  ],
  [
    { x: 681, y: 71, text: "板橋区", size: 64, weight: 500 },
    { x: 20, y: 196, text: "西武", rotate: 20, fill: "#50555a" },
    { x: 148, y: 210, text: "新宿線", rotate: -2, fill: "#50555a" },
    { x: 128, y: 309, text: "中央線", fill: "#50555a" },
    { x: 305, y: 382, text: "三鷹市" },
    { x: 148, y: 467, text: "調布市" },
    { x: 664, y: 296, text: "新宿区", size: 64, weight: 500 },
    { x: 664, y: 420, text: "渋谷区", size: 64, weight: 500 },
    { x: 1040, y: 294, text: "江戸川区", size: 64, weight: 500 },
    { x: 871, y: 406, text: "東京", size: 84, weight: 500 },
    { x: 1142, y: 477, text: "江東区", size: 64, weight: 500 },
    { x: 818, y: 535, text: "港区", size: 64, weight: 500 },
    { x: 505, y: 580, text: "世田谷区", size: 64, weight: 500 },
    { x: 749, y: 624, text: "品川区", size: 64, weight: 500 },
    { x: 220, y: 615, text: "南武線", rotate: 25, fill: "#50555a" },
    { x: 1328, y: 221, text: "市" },
    { x: 1520, y: 292, text: "船橋", size: 64, weight: 500 },
    { x: 661, y: 925, text: "川崎市", size: 86, weight: 500 },
    { x: 457, y: 1328, text: "横浜市", size: 86, weight: 500 },
    { x: 1530, y: 1325, text: "浦市" },
    { x: 1365, y: 1515, text: "木更津市" },
  ],
];

// town markers as x, y, radius
const dots = [
  [[1378, 65, 7], [577, 323, 11], [710, 283, 11], [200, 446, 11], [427, 505, 11], [1378, 648, 11], [1269, 877, 11], [1085, 986, 7], [793, 1089, 7], [638, 1153, 7], [958, 1126, 11], [1128, 1427, 7]],
  [[473, 194, 7], [1296, 246, 11], [1124, 276, 11], [1004, 431, 11], [1516, 420, 11], [346, 572, 11], [1184, 801, 11], [1391, 897, 11], [107, 969, 7], [1241, 1287, 11], [1150, 1300, 11], [1356, 1326, 11]],
  [[681, 100, 11], [209, 364, 11], [148, 492, 11], [664, 324, 11], [664, 448, 11], [1187, 271, 11], [1025, 405, 11], [817, 463, 11], [505, 507, 11], [749, 654, 11], [1377, 246, 11], [662, 958, 13]],
];

type Sign = { x: number; y: number; text: string; kind: "national" | "expressway" | "metro" };

const signs: Sign[][] = [
  [
    { x: 921, y: 166, text: "411", kind: "national" },
    { x: 1542, y: 55, text: "139", kind: "national" },
    { x: 1426, y: 523, text: "139", kind: "national" },
    { x: 812, y: 772, text: "137", kind: "national" },
    { x: 150, y: 1161, text: "300", kind: "national" },
    { x: 342, y: 1185, text: "139", kind: "national" },
    { x: 294, y: 1338, text: "139", kind: "national" },
    { x: 1106, y: 1533, text: "138", kind: "national" },
    { x: 913, y: 614, text: "E20", kind: "expressway" },
    { x: 887, y: 1248, text: "E68", kind: "expressway" },
  ],
  [
    { x: 952, y: 488, text: "20", kind: "national" },
    { x: 691, y: 621, text: "20", kind: "national" },
    { x: 20, y: 1025, text: "413", kind: "national" },
    { x: 1437, y: 999, text: "16", kind: "national" },
    { x: 184, y: 559, text: "E20", kind: "expressway" },
    { x: 1050, y: 1446, text: "E1A", kind: "expressway" },
  ],
  [
    { x: 198, y: 1386, text: "1", kind: "national" },
    { x: 1149, y: 345, text: "C2", kind: "metro" },
    { x: 1332, y: 457, text: "B", kind: "metro" },
    { x: 875, y: 956, text: "K6", kind: "metro" },
    { x: 564, y: 1108, text: "K1", kind: "metro" },
    { x: 1350, y: 100, text: "C3", kind: "expressway" },
    { x: 1082, y: 1117, text: "CA", kind: "expressway" },
    { x: 1278, y: 1278, text: "CA", kind: "expressway" },
    { x: 413, y: 1530, text: "B", kind: "metro" },
  ],
];

const ferries = [
  "M850 580C870 640 900 700 960 740S1100 830 1160 880S1230 980 1235 1080S1180 1240 1100 1330S980 1460 930 1546",
  "M858 570C880 640 910 700 970 735S1110 830 1170 875S1245 980 1243 1080S1190 1250 1110 1340S990 1470 945 1546",
  "M865 610C890 680 930 730 1000 780S1100 860 1150 900S1220 990 1222 1080S1160 1240 1090 1330S960 1470 900 1546",
  "M930 690C960 640 1000 610 1060 630S1130 760 1120 850S1140 980 1130 1060S1000 1240 900 1300S700 1310 590 1280",
  "M1120 860C1180 920 1190 1020 1180 1080S1120 1200 1060 1290S940 1400 860 1500",
  "M1120 880C1110 1020 1000 1150 890 1250S760 1400 730 1490",
  "M640 1290L780 1370L900 1470L930 1500",
  "M930 690L960 760L1000 800L1070 780L1100 730L1070 640",
];

// faint relief over the mountains
function reliefFacets() {
  const tones = ["#e6f8e2", "#cdebda", "#def7e8", "#d0ebda", "#c6e4d2"];
  let seed = 77;
  const next = () => {
    seed = (seed * 16807) % 2147483647;
    return seed / 2147483647;
  };
  return Array.from({ length: 1600 }, (_, i) => {
    const x = Math.round(next() * 2700);
    const y = Math.round(next() * 1540);
    const w = Math.round(8 + next() * 34);
    const h = Math.round(8 + next() * 34);
    const bend = Math.round(next() * 40 - 12);
    return {
      fill: tones[i % tones.length],
      d: `M${x} ${y}l${w} ${-h}l${bend} ${Math.round(h * 0.7)}l${-w} ${Math.round(h * 0.6)}Z`,
    };
  });
}

const facets = reliefFacets();

function Layer({ paths, ...rest }: { paths: string[][] } & SVGProps<SVGGElement>) {
  return (
    <g {...rest}>
      {paths.map((tile, i) => (
        <path key={i} transform={`translate(${i * TILE})`} d={tile.join("")} />
      ))}
    </g>
  );
}

function RoadSign({ x, y, text, kind }: Sign) {
  const wide = text.length > 2 ? 47 : 35;
  return (
    <g transform={`translate(${x} ${y})`}>
      {kind === "national" && (
        <path
          d={`M${-wide + 6} -28Q0 -36 ${wide - 6} -28L${wide} -24Q${wide} 10 ${wide / 2} 20Q14 24 0 32Q-14 24 ${-wide / 2} 20Q${-wide} 10 ${-wide} -24Z`}
          fill="#4a7ac7"
        />
      )}
      {kind === "expressway" && (
        <rect x={text.length > 2 ? -47 : -39} y="-24" width={text.length > 2 ? 94 : 78} height="48" fill="#789f4c" />
      )}
      {kind === "metro" && <path d="M-42 -28H42V-12Q42 32 0 34Q-42 32 -42 -12Z" fill="#789f4c" />}
      <text
        y="13"
        textAnchor="middle"
        fontSize="38"
        fontWeight="700"
        fill="#fff"
        fontFamily="Roboto, sans-serif"
      >
        {text}
      </text>
    </g>
  );
}

function MountainPin({ x, y }: { x: number; y: number }) {
  return (
    <g transform={`translate(${x} ${y})`}>
      <path d="M0 67L-14 52A52 52 0 1 1 14 52Z" fill="#fff" stroke="#cfd8d3" strokeWidth="2" />
      <circle r="44" fill="#4fa677" />
      <path d="M-26 18L-6 -22L6 0L-2 18ZM2 18L14 -6L26 18Z" fill="#fff" />
    </g>
  );
}

function TileGroup({ index, children }: { index: number; children: ReactNode }) {
  return <g transform={`translate(${index * TILE})`}>{children}</g>;
}

function MapCanvas() {
  return (
    <svg
      viewBox="44 22 4636 1524"
      preserveAspectRatio="xMinYMin slice"
      className="block w-full"
      role="img"
      aria-label="Map"
    >
      <rect x="44" y="22" width="4640" height="1530" fill="#d7f5e2" />
      <Layer paths={forests.map((tile, i) => (i === 2 ? [] : tile))} fill="#c5edd3" />
      <g opacity="0.45">
        {facets.map((facet, i) => (
          <path key={i} d={facet.d} fill={facet.fill} />
        ))}
      </g>
      <Layer paths={flats} fill="#f7f7f7" />
      <Layer paths={sand} fill="#f5efe3" />
      <Layer paths={greys} fill="#e0e1e6" />
      <Layer paths={[[], forests[1].slice(4), forests[2]]} fill="#c9efd7" />
      <Layer paths={streams} fill="none" stroke="#a0dbec" strokeWidth="4" />
      <Layer paths={water} fill="#a1d8eb" />
      <TileGroup index={2}>
        {islands.map((island) => (
          <path key={island.d} d={island.d} fill={island.fill} />
        ))}
        {ferries.map((ferry) => (
          <path key={ferry} d={ferry} fill="none" stroke="#72bdd6" strokeWidth="3" strokeDasharray="22 10" />
        ))}
      </TileGroup>
      <Layer paths={minorRoads} fill="none" stroke="#d5d8de" strokeWidth="6" strokeLinejoin="round" />
      <Layer paths={roads} fill="none" stroke="#7f8fb8" strokeWidth="10" strokeLinejoin="round" strokeLinecap="round" />
      <Layer paths={roads} fill="none" stroke="#aab8d8" strokeWidth="6" strokeLinejoin="round" strokeLinecap="round" />
      <Layer paths={rails} fill="none" stroke="#1c1c1c" strokeWidth="2.500" strokeLinejoin="round" />
      <path
        d="M2690 1546L3136 1305L3310 1210L3480 1090L3600 960L3680 780L3720 750L3840 710L3880 650L3960 480L4010 350L4045 220L3920 100"
        fill="none"
        stroke="#8fc0cb"
        strokeWidth="6"
      />
      <Layer paths={borders} fill="none" stroke="#666" strokeWidth="4" strokeDasharray="12 9" />
      {signs.map((tile, i) => (
        <TileGroup key={i} index={i}>
          {tile.map((sign) => (
            <RoadSign key={`${sign.x}-${sign.y}`} {...sign} />
          ))}
        </TileGroup>
      ))}
      {places.map((tile, i) => (
        <TileGroup key={i} index={i}>
          {dots[i].map(([cx, cy, r]) => (
            <circle key={`${cx}-${cy}`} cx={cx} cy={cy} r={r} fill="#fff" stroke="#444" strokeWidth="4" />
          ))}
          {tile.map((place) => (
            <text
              key={place.text + place.x}
              x={place.x}
              y={place.y}
              textAnchor="middle"
              transform={place.rotate ? `rotate(${place.rotate} ${place.x} ${place.y})` : undefined}
              fontSize={place.size ?? 51}
              fontWeight={place.weight ?? 400}
              fill={place.fill ?? "#2f3337"}
              stroke="#fff"
              strokeWidth="7"
              strokeLinejoin="round"
              paintOrder="stroke"
              fontFamily="Noto Sans CJK JP, sans-serif"
            >
              {place.text}
            </text>
          ))}
        </TileGroup>
      ))}
      <TileGroup index={1}>
        <MountainPin x={519} y={1112} />
      </TileGroup>
      <MountainPin x={702} y={1556} />
      {routes.map((tile, i) => (
        <TileGroup key={i} index={i}>
          {tile.map((segment) => (
            <path
              key={segment.d}
              d={segment.d}
              fill="none"
              stroke={segment.color}
              strokeWidth="13"
              strokeLinejoin="round"
              strokeLinecap="round"
            />
          ))}
        </TileGroup>
      ))}
      <TileGroup index={2}>
        <path
          d="M1060 190C1052 140 1004 125 1004 86A56 56 0 0 1 1116 86C1116 125 1068 140 1060 190Z"
          fill="#d8503f"
          stroke="#b03a2c"
          strokeWidth="2"
        />
        <circle cx="1060" cy="87" r="22" fill="#a52a1e" />
      </TileGroup>
      <text
        x="86"
        y="1510"
        fontSize="78"
        fontFamily="Lato, sans-serif"
        fontWeight="600"
        stroke="#fff"
        strokeWidth="8"
        paintOrder="stroke"
      >
        <tspan fill="#5086ec">G</tspan>
        <tspan fill="#d95140">o</tspan>
        <tspan fill="#f2bd42">o</tspan>
        <tspan fill="#5086ec">g</tspan>
        <tspan fill="#58a55c">l</tspan>
        <tspan fill="#d95140">e</tspan>
      </text>
    </svg>
  );
}

function Pegman() {
  return (
    <svg viewBox="0 0 34 60" className="h-15 w-[34px]" aria-hidden="true">
      <path
        d="M9 21H25Q30 21 31 27L33 42L29 44L26 36V59H18V46H16V59H8V36L5 44L1 42L3 27Q4 21 9 21Z"
        fill="#f0b840"
        stroke="#8a7a50"
        strokeWidth="1"
      />
      <path d="M12 21H22L17 31Z" fill="#d07c2c" />
      <circle cx="17" cy="11" r="10" fill="#f0b840" stroke="#8a7a50" strokeWidth="1" />
    </svg>
  );
}

function MapPanel() {
  return (
    <div className="relative overflow-hidden font-['Noto_Sans_CJK_JP',sans-serif]">
      <MapCanvas />
      <div className="absolute top-5 left-5 flex h-20 rounded-sm bg-white text-4xl shadow-md">
        <button type="button" className="w-35 pb-1 font-medium text-black">
          地図
        </button>
        <button type="button" className="w-53 border-l border-[#e6e6e6] pb-1 text-[#565656]">
          航空写真
        </button>
      </div>
      <button
        type="button"
        aria-label="Full screen"
        className="absolute top-5 right-5 flex size-20 items-center justify-center rounded-sm bg-white shadow-md"
      >
        <svg viewBox="0 0 36 36" className="size-9" fill="none" stroke="#666" strokeWidth="5">
          <path d="M2.500 12V2.500H12M24 2.500H33.500V12M33.500 24V33.500H24M12 33.500H2.500V24" />
        </svg>
      </button>
      <div className="absolute right-5 bottom-12 flex w-20 flex-col gap-16">
        <button
          type="button"
          aria-label="Street View"
          className="flex size-20 items-center justify-center rounded-sm bg-white shadow-md"
        >
          <Pegman />
        </button>
        <div className="flex flex-col items-center bg-white shadow-md">
          <button type="button" aria-label="Zoom in" className="flex size-20 items-center justify-center">
            <svg viewBox="0 0 36 36" className="size-9" stroke="#333" strokeWidth="8">
              <path d="M18 0V36M0 18H36" />
            </svg>
          </button>
          <div className="h-0.5 w-15 bg-[#e6e6e6]" />
          <button type="button" aria-label="Zoom out" className="flex size-20 items-center justify-center">
            <svg viewBox="0 0 36 36" className="size-9" stroke="#666" strokeWidth="8">
              <path d="M0 18H36" />
            </svg>
          </button>
        </div>
      </div>
      <div className="absolute right-0 bottom-0 flex h-7 gap-0.5 text-xl leading-7 text-black">
        <button type="button" className="bg-white/70 px-3">キーボード ショートカット</button>
        <span className="bg-white/70 px-3">地図データ ©2024</span>
        <a href="#" className="bg-white/70 px-3">利用規約</a>
        <a href="#" className="bg-white/70 px-3">地図の誤りを報告する</a>
      </div>
    </div>
  );
}

function Tick() {
  return (
    <input
      type="checkbox"
      className="size-[26px] appearance-none rounded-[5px] border-2 border-[#767676] bg-white"
    />
  );
}

function MapToolbar() {
  return (
    <div className="flex justify-center bg-white">
      <div className="flex gap-2.5 pt-1.5 font-['Liberation_Sans'] text-[26px] leading-[39px]">
        {["Clear points", "Hide markers", "Save .gpx", "View FULL SCREEN"].map((label) => (
          <button
            key={label}
            type="button"
            className="rounded-md border-2 border-[#767676] bg-[#efefef] px-4"
          >
            {label}
          </button>
        ))}
      </div>
      <label className="ml-5 flex items-center gap-4 text-[33px] leading-12">
        <Tick />
        Click deletes waypoints
      </label>
    </div>
  );
}

function LegendTable() {
  return (
    <table className="border-separate border-spacing-1 border-2 border-t-[#808080] border-r-[#2c2c2c] border-b-[#2c2c2c] border-l-[#808080] text-[32px] tabular-nums">
      <tbody>
        {legend.map((row) => (
          <tr key={row.label}>
            <td
              className={`${row.color} w-[58px] border-2 border-t-[#2c2c2c] border-r-[#808080] border-b-[#808080] border-l-[#2c2c2c]`}
            />
            <td className="h-14 w-[229px] border-2 border-t-[#2c2c2c] border-r-[#808080] border-b-[#808080] border-l-[#2c2c2c] px-0.5 py-0 whitespace-nowrap">
              {row.label}
            </td>
          </tr>
        ))}
      </tbody>
    </table>
  );
}

export default function App() {
  return (
    <div className="h-screen overflow-hidden border-t-2 border-black bg-white px-4 pt-3.5 font-['Inter','Noto_Sans_CJK_JP',sans-serif] text-[34px] leading-12 text-black">
      <header>
        <h1 className="text-[33px] tabular-nums">1733502129.gpx</h1>
        <div className="mt-3 grid grid-cols-[3fr_1fr]">
          <div className="flex justify-end pr-3">
            <Logo />
          </div>
        </div>
        <div className="mt-5 flex h-12 items-center justify-end">
          <HideLink label="hide legend" />
        </div>
      </header>

      <main className="grid grid-cols-[3fr_1fr] bg-[#d2e1f1]">
        <div className="pr-0.5 pl-1">
          <SectionHeader title="Elevation from Google Maps" link="hide graph" first />
          <section className="bg-white pt-3">
            <p className="px-3.5 italic">(move mouse over blue area to see marker)</p>
            <div className="mt-5">
              <ElevationChart samples={googleSamples} label="Elevation from Google Maps" />
            </div>
            <div className="mt-6 flex items-center pb-[22px] text-[33px]">
              <span className="mr-14">(x-axis is distance)</span>
              <label className="flex items-center gap-4">
                <Tick />
                auto center
              </label>
            </div>
          </section>

          <SectionHeader title="Add points by clicking on the map" link="hide map" />
          <MapPanel />
          <MapToolbar />

          <SectionHeader title="Elevation from GPX file" link="hide graph" />
          <section className="bg-white pt-1.5">
            <p className="px-1.5">(move mouse over blue area to see marker)</p>
            <div className="mt-3.5">
              <ElevationChart samples={gpxSamples} label="Elevation from GPX file" />
            </div>
          </section>
        </div>

        <aside className="flex flex-col items-center pt-3">
          <div className="flex flex-col gap-2 pr-2.5">
            <StatsBox
              units={["km", "mi"]}
              widths={["w-[110px]", "w-[110px]"]}
              rows={[{ label: "Distance", values: ["263.68", "163.84"] }]}
            />
            <StatsBox
              units={["m", "feet"]}
              widths={["w-[88px]", "w-[108px]"]}
              rows={[
                { label: "Total climb", values: ["4409", "14466"] },
                { label: "Total descent", values: ["4409", "14466"] },
                { label: "Lowest point", values: ["1", "4"] },
                { label: "Highest point", values: ["1341", "4399"] },
              ]}
            />
          </div>
          <div className="mt-[109px] pr-1.5">
            <LegendTable />
          </div>
          <div className="mt-29 flex flex-col gap-2 pr-2.5">
            <StatsBox
              mono
              units={["km", "mi"]}
              widths={["w-[98px]", "w-[98px]"]}
              rows={[{ label: "Distance", values: ["311.37", "193.47"] }]}
            />
            <StatsBox
              mono
              units={["m", "feet"]}
              widths={["w-[88px]", "w-[108px]"]}
              rows={[{ label: "Total climb", values: ["5210", "17093"] }]}
            />
          </div>
        </aside>
      </main>
    </div>
  );
}
